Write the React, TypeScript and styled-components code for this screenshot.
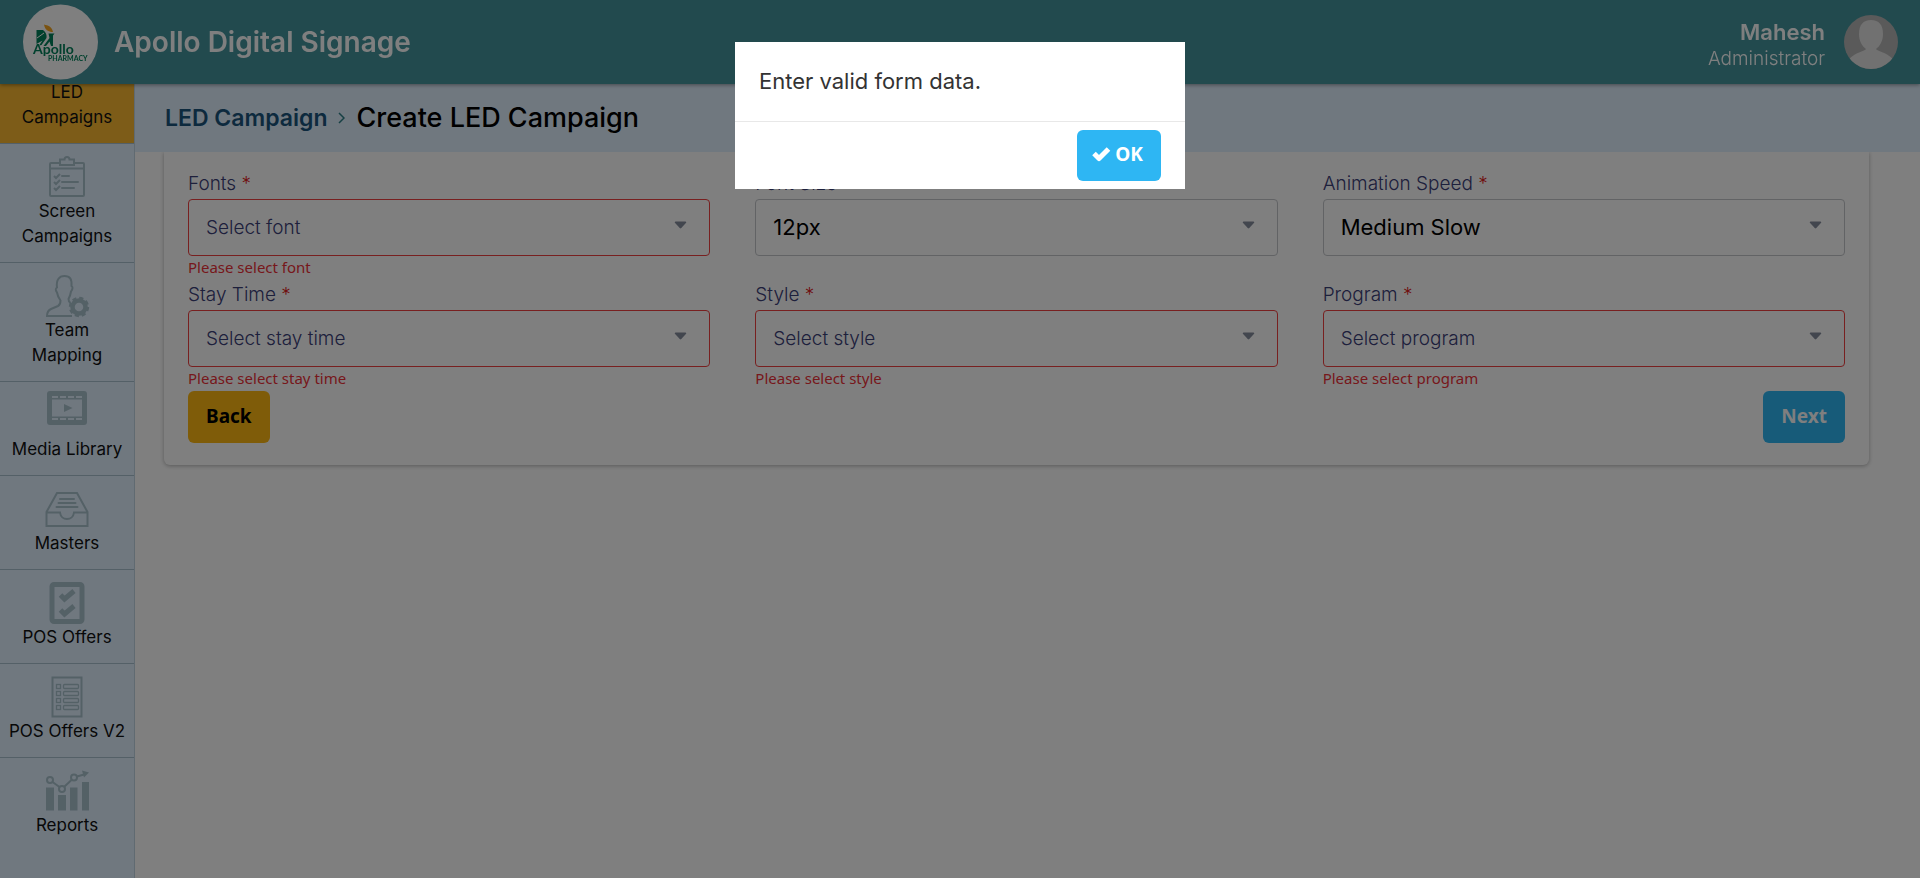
import React, { useLayoutEffect, useRef } from "react";
import styled, { createGlobalStyle } from "styled-components";

const uiFont = `Inter, "Open Sans", sans-serif`;
const altFont = `"Noto Sans", "Open Sans", sans-serif`;

const GlobalStyle = createGlobalStyle`
  *, *::before, *::after { box-sizing: border-box; }
  body { margin: 0; background: #fff; color: #000; font-family: ${uiFont}; }
  button, select { font: inherit; }
`;

const Shell = styled.div`
  display: flex;
  flex-direction: column;
  height: 100vh;
  overflow: hidden;
`;

const Header = styled.header`
  display: flex;
  align-items: center;
  flex: none;
  height: 84px;
  padding: 0 22px;
  background: #44959d;
  color: #fff;
  box-shadow: 0 1px 4px rgba(0, 0, 0, 0.4);
  z-index: 1;
`;

const Logo = styled.svg`
  width: 76px;
  height: 76px;
  margin-right: 16px;
`;

const AppTitle = styled.h1`
  flex: 1;
  margin: 0;
  font-size: 28px;
  line-height: 40px;
  font-weight: 600;
`;

const User = styled.div`
  padding-top: 7px;
  margin-right: 19px;
  text-align: right;
`;

const UserName = styled.div`
  font-size: 22px;
  line-height: 26px;
  font-weight: 600;
`;

const UserRole = styled.div`
  font-size: 19px;
  line-height: 28px;
  font-weight: 300;
`;

const Avatar = styled.svg`
  width: 54px;
  height: 54px;
`;

const Body = styled.div`
  display: flex;
  flex: 1;
  min-height: 0;
`;

const Sidebar = styled.nav`
  flex: none;
  width: 135px;
  overflow-y: auto;
  scrollbar-width: none;
  padding-bottom: 26px;
  background: #e0f0ff;
  border-right: 1px solid #c0d4e2;
`;

const NavLink = styled.a<{ $active?: boolean }>`
  display: flex;
  flex-direction: column;
  align-items: center;
  padding: 12px 4px 13px;
  border-bottom: 1px solid #a9c0cf;
  background: ${(p) => (p.$active ? "#fbb831" : "transparent")};
  color: #111;
  font-size: 17px;
  line-height: 25px;
  font-weight: 400;
  text-align: center;
  text-decoration: none;
  &:last-child { border-bottom-color: transparent; }
`;

const NavIcon = styled.svg`
  width: 44px;
  height: 42px;
  margin-bottom: 1px;
  overflow: visible;
  color: #a9c2cd;
`;

const NavLine = styled.span`
  white-space: nowrap;
`;

const Main = styled.main`
  flex: 1;
  min-width: 0;
`;

const Breadcrumb = styled.nav`
  display: flex;
  align-items: center;
  gap: 11px;
  height: 68px;
  padding: 0 30px;
  background: #e0f0ff;
`;

const CrumbLink = styled.a`
  color: #1b557c;
  font-size: 23px;
  line-height: 34px;
  font-weight: 600;
  text-decoration: none;
`;

const CrumbArrow = styled.svg`
  width: 7px;
  height: 12px;
  color: #2f8088;
`;

const CrumbCurrent = styled.h2`
  margin: 0;
  font-size: 27px;
  line-height: 34px;
  font-weight: 500;
`;

const Card = styled.form`
  margin: 0 51px 0 29px;
  padding: 21px 24px 22px;
  border-radius: 0 0 6px 6px;
  box-shadow: 0 1px 4px rgba(0, 0, 0, 0.3);
  clip-path: inset(0 -8px -8px -8px);
`;

const Fields = styled.div`
  display: grid;
  grid-template-columns: repeat(3, 1fr);
  gap: 4px 45px;
`;

const FieldBox = styled.div`
  display: flex;
  flex-direction: column;
`;

const Label = styled.label`
  margin-bottom: 4px;
  color: #3b4078;
  font-size: 19px;
  line-height: 22px;
  font-weight: 300;
`;

const Required = styled.span`
  color: #e02020;
`;

const SelectWrap = styled.div`
  position: relative;
`;

const Select = styled.select<{ $invalid: boolean; $empty: boolean }>`
  display: block;
  width: 100%;
  height: 57px;
  padding: 0 48px 1px 17px;
  appearance: none;
  border: 1px solid ${(p) => (p.$invalid ? "#f04040" : "#c4c6ca")};
  border-radius: 4px;
  background: transparent;
  color: ${(p) => (p.$empty ? "#3b4078" : "#000")};
  font-size: ${(p) => (p.$empty ? "19px" : "22px")};
  font-weight: ${(p) => (p.$empty ? 300 : 400)};
`;

const Caret = styled.svg`
  position: absolute;
  top: 22px;
  right: 23px;
  width: 13px;
  height: 8px;
  color: #858c9c;
  pointer-events: none;
`;

const ErrorText = styled.div`
  min-height: 24px;
  color: #ee3038;
  font-family: ${altFont};
  font-size: 15px;
  line-height: 22px;
`;

const Actions = styled.div`
  display: flex;
  justify-content: space-between;
`;

const Button = styled.button<{ $tone: "amber" | "blue" }>`
  display: inline-flex;
  align-items: center;
  gap: 4px;
  height: 52px;
  padding: 0 18px 3px;
  border: 0;
  border-radius: 6px;
  background: ${(p) => (p.$tone === "amber" ? "#ffb812" : "#2eb6f3")};
  color: ${(p) => (p.$tone === "amber" ? "#000" : "#fff")};
  font-family: ${altFont};
  font-size: 19px;
  font-weight: 700;
`;

const OkButton = styled(Button)`
  height: 51px;
  padding: 0 18px 3px 14px;
`;

const CheckIcon = styled.svg`
  width: 20px;
  height: 16px;
`;

const Overlay = styled.div`
  position: fixed;
  inset: 0;
  z-index: 10;
  display: flex;
  justify-content: center;
  align-items: flex-start;
  padding-top: 42px;
  background: rgba(0, 0, 0, 0.5);
`;

const Dialog = styled.div`
  width: 450px;
  background: #fff;
`;

const DialogBody = styled.p`
  margin: 0;
  padding: 24px;
  border-bottom: 1px solid #e8e8e8;
  color: #333;
  font-size: 22px;
  line-height: 31px;
`;

const DialogFooter = styled.div`
  display: flex;
  justify-content: flex-end;
  padding: 8px 24px;
`;

const icons = {
  clipboard: (
    <g fill="none" stroke="currentColor" strokeWidth="2">
      <path d="M14 7H6a1 1 0 0 0-1 1v31a1 1 0 0 0 1 1h32a1 1 0 0 0 1-1V8a1 1 0 0 0-1-1h-8M5 12.500h34" />
      <path d="M15 9V3.500h4.500a2.500 2.500 0 0 1 5 0H29V9z" />
      <path d="m9 20 2 2 4-4M9 26l2 2 4-4M9 32l2 2 4-4" />
      <path d="M17 20h7M17 26h16M17 32h12" strokeLinecap="round" />
    </g>
  ),
  team: (
    <g fill="none" stroke="currentColor" strokeWidth="2">
      <path d="M27 41H2c0-4 1-5.500 4-7l7-3c2-1 2.500-3 2.500-5.500-1.500-2-3-5-3.500-8-2-3-1.500-4 0-5C11 5 14 1 19.500 1S27 4 26.500 11c1.500 1 1.500 2.500-.5 5.500-.5 3-1 5-2.500 7.500 0 2 .5 3 2 4" />
      <circle cx="34" cy="32" r="6.500" strokeWidth="4.500" />
      <circle cx="34" cy="32" r="8.700" strokeWidth="3" strokeDasharray="4 2.830" />
    </g>
  ),
  media: (
    <g>
      <path fill="currentColor" fillRule="evenodd" d="M5 0h34a3 3 0 0 1 3 3v28a3 3 0 0 1-3 3H5a3 3 0 0 1-3-3V3a3 3 0 0 1 3-3zm2 8.500v17h30v-17zM7 5v2h6V5zm8 0v2h6V5zm8 0v2h6V5zm8 0v2h6V5zM7 27v2h6v-2zm8 0v2h6v-2zm8 0v2h6v-2zm8 0v2h6v-2z" transform="translate(0 -3)" />
      <path fill="currentColor" d="m19 10 8.500 4-8.500 4z" />
    </g>
  ),
  masters: (
    <g fill="none" stroke="currentColor" strokeWidth="2" transform="translate(0 -2)">
      <path d="M1.500 26 12 7h20l10.500 19v14h-41zM1.500 26.500H15c.5 4 3.500 6.500 7 6.500s6.500-2.500 7-6.500h13.500" />
      <path d="M15 13h14M13.500 17h17M11.500 21h21" strokeLinecap="round" />
    </g>
  ),
  checks: (
    <g fill="none" stroke="currentColor">
      <rect x="7" y="2.500" width="30" height="37" rx="2" strokeWidth="5" />
      <path strokeWidth="5" d="m15.500 13 4 4L29 9M15.500 28l4 4 9.500-8" />
    </g>
  ),
  list: (
    <g fill="none" stroke="currentColor">
      <rect x="7.500" y="1.500" width="29" height="39" strokeWidth="2" />
      {[8.5, 15.5, 22.5, 29.5].map((y) => (
        <g key={y} strokeWidth="1.300">
          <rect x="11.500" y={y} width="4" height="4" />
          <rect x="18.500" y={y} width="15" height="4" rx="1" />
        </g>
      ))}
    </g>
  ),
  reports: (
    <g fill="currentColor" stroke="none">
      <path d="M1 17.500h8v23H1zM13 25h8v15.500h-8zM25 17.500h7.500v23H25zM37 12h7v28.500h-7z" />
      <g fill="none" stroke="currentColor" strokeWidth="2">
        <circle cx="5" cy="10" r="3" />
        <circle cx="17" cy="19" r="3" />
        <circle cx="29" cy="7.500" r="3" />
        <path d="m7.500 12 7 5M19 17l8-7.500M32 6.500l7-2" />
      </g>
      <path d="m37 .500 7 2-5 5z" />
    </g>
  ),
};

type IconName = keyof typeof icons;

const navItems: { lines: string[]; icon: IconName; active?: boolean }[] = [
  { lines: ["LED", "Campaigns"], icon: "clipboard", active: true },
  { lines: ["Screen", "Campaigns"], icon: "clipboard" },
  { lines: ["Team", "Mapping"], icon: "team" },
  { lines: ["Media Library"], icon: "media" },
  { lines: ["Masters"], icon: "masters" },
  { lines: ["POS Offers"], icon: "checks" },
  { lines: ["POS Offers V2"], icon: "list" },
  { lines: ["Reports"], icon: "reports" },
];

interface FieldProps {
  id: string;
  label: string;
  option: string;
  error?: string;
}

const fields: FieldProps[] = [
  { id: "font", label: "Fonts", option: "Select font", error: "Please select font" },
  { id: "size", label: "Font Size", option: "12px" },
  { id: "speed", label: "Animation Speed", option: "Medium Slow" },
  { id: "stay", label: "Stay Time", option: "Select stay time", error: "Please select stay time" },
  { id: "style", label: "Style", option: "Select style", error: "Please select style" },
  { id: "program", label: "Program", option: "Select program", error: "Please select program" },
];

function Field({ id, label, option, error }: FieldProps) {
  return (
    <FieldBox>
      <Label htmlFor={id}>
        {label} <Required>*</Required>
      </Label>
      <SelectWrap>
        <Select id={id} $invalid={!!error} $empty={!!error}>
          <option>{option}</option>
        </Select>
        <Caret viewBox="0 0 13 8" aria-hidden="true">
          <path d="M1.500.500h10a.8.8 0 0 1 .6 1.300L7.300 7a1.100 1.100 0 0 1-1.600 0L.9 1.800A.8.8 0 0 1 1.500.500z" fill="currentColor" />
        </Caret>
      </SelectWrap>
      <ErrorText>{error}</ErrorText>
    </FieldBox>
  );
}

export default function App() {
  const sidebar = useRef<HTMLElement>(null);

  // Open with the sidebar scrolled to its last entry.
  useLayoutEffect(() => {
    if (sidebar.current) sidebar.current.scrollTop = sidebar.current.scrollHeight;
  }, []);

  return (
    <>
      <GlobalStyle />
      <Shell>
        <Header>
          <Logo viewBox="0 0 76 76" role="img" aria-label="Apollo Pharmacy">
            <circle cx="38.500" cy="38" r="37.500" fill="#fff" />
            <path d="M22 20.500c4 1 8 2 9 7.500-5 0-8-2-9-7.500z" fill="#f5a623" />
            <path d="M14.500 26H21c3 2 4 5 3.500 8l-5 7-2.500.5 3.500-5-6 3.500z" fill="#00805a" />
            <path d="M26.500 29.500h6l-1.500 2V42h-2l-1.500-4.500L24 42h-2.500l6-8z" fill="#00805a" />
            <path d="m15 34 7-5" stroke="#fff" strokeWidth="1" />
            <text x="11" y="50" fontFamily="Lato, sans-serif" fontSize="14" fontWeight="700" fill="#00805a">Apollo</text>
            <text x="26" y="57" fontFamily="Lato, sans-serif" fontSize="7" fontWeight="700" fill="#00805a">PHARMACY</text>
          </Logo>
          <AppTitle>Apollo Digital Signage</AppTitle>
          <User>
            <UserName>Mahesh</UserName>
            <UserRole>Administrator</UserRole>
          </User>
          <Avatar viewBox="0 0 54 54" role="img" aria-label="Mahesh">
            <defs>
              <clipPath id="avatar-clip"><circle cx="27" cy="27" r="27" /></clipPath>
            </defs>
            <g clipPath="url(#avatar-clip)">
              <rect width="54" height="54" fill="#b4b4b4" />
              <path d="M27 5c8 0 12 5 12 14 0 7-3 12-7 15 1 2 10 3 17 10v12H5V44c7-7 16-8 17-10-4-3-7-8-7-15C15 10 19 5 27 5z" fill="#e2e2e2" />
            </g>
          </Avatar>
        </Header>
        <Body>
          <Sidebar ref={sidebar} aria-label="Main">
            {navItems.map((item) => (
              <NavLink key={item.lines.join(" ")} href="#" $active={item.active}>
                <NavIcon viewBox="0 0 44 42" aria-hidden="true">{icons[item.icon]}</NavIcon>
                {item.lines.map((line) => (
                  <NavLine key={line}>{line}</NavLine>
                ))}
              </NavLink>
            ))}
          </Sidebar>
          <Main>
            <Breadcrumb aria-label="Breadcrumb">
              <CrumbLink href="#">LED Campaign</CrumbLink>
              <CrumbArrow viewBox="0 0 7 12" aria-hidden="true">
                <path d="m1 1 5 5-5 5" fill="none" stroke="currentColor" strokeWidth="1.500" />
              </CrumbArrow>
              <CrumbCurrent>Create LED Campaign</CrumbCurrent>
            </Breadcrumb>
            <Card onSubmit={(e) => e.preventDefault()}>
              <Fields>
                {fields.map((f) => (
                  <Field key={f.id} {...f} />
                ))}
              </Fields>
              <Actions>
                <Button type="button" $tone="amber">Back</Button>
                <Button type="submit" $tone="blue">Next</Button>
              </Actions>
            </Card>
          </Main>
        </Body>
      </Shell>
      <Overlay>
        <Dialog role="alertdialog" aria-modal="true" aria-describedby="dialog-text">
          <DialogBody id="dialog-text">Enter valid form data.</DialogBody>
          <DialogFooter>
            <OkButton type="button" $tone="blue">
              <CheckIcon viewBox="0 0 20 16" aria-hidden="true">
                <path d="m3 7.500 5 5 9.500-9.500" fill="none" stroke="currentColor" strokeWidth="5" strokeLinejoin="round" />
              </CheckIcon>
              OK
            </OkButton>
          </DialogFooter>
        </Dialog>
      </Overlay>
    </>
  );
}
